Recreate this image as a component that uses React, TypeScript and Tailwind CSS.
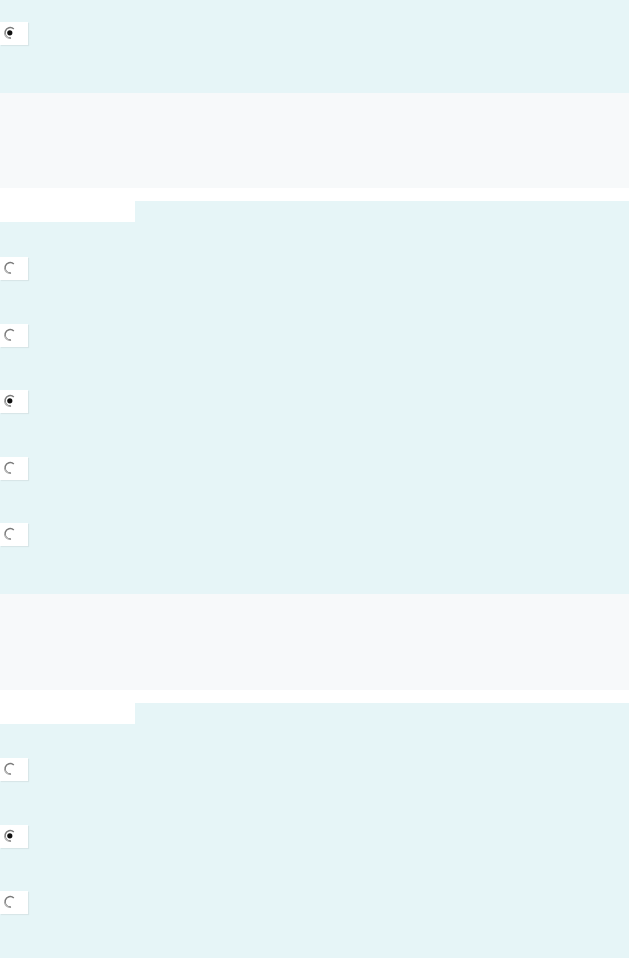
const Radio: React.FC<{ checked?: boolean }> = ({ checked }) => (
  <div className="w-[28px] h-[23px] bg-white shadow-[1px_1px_1px_rgba(0,0,0,0.06)]">
    <svg width="28" height="23" viewBox="0 0 28 23">
      <path
        d="M13.8 7 A5.2 5.2 0 1 0 11 15.9"
        fill="none"
        stroke="#7a7a7a"
        strokeWidth="1.5"
      />
      <path
        d="M4.6 12 A5.2 5.2 0 0 0 8.5 15.9"
        fill="none"
        stroke="#bdbdbd"
        strokeWidth="1.2"
      />
      {checked && <circle cx="9.8" cy="10.8" r="2.6" fill="#111111" />}
    </svg>
  </div>
);

const Row: React.FC<{ checked?: boolean }> = ({ checked }) => (
  <div className="h-[66.5px]">
    <Radio checked={checked} />
  </div>
);

const Tab: React.FC = () => (
  <>
    <div className="h-[13px] bg-white" />
    <div className="h-[21px] flex">
      <div className="w-[135px] bg-white" />
      <div className="flex-1" />
    </div>
  </>
);

const App: React.FC = () => {
  return (
    <div className="min-h-[958px] w-full bg-[#e6f5f7] font-['Liberation_Sans',sans-serif]">
      <div className="h-[93px] pt-[22px]">
        <Radio checked />
      </div>
      <div className="h-[95px] bg-[#f7f9fa]" />
      <div className="h-[406px]">
        <Tab />
        <div className="pt-[35px]">
          <Row />
          <Row />
          <Row checked />
          <Row />
          <Row />
        </div>
      </div>
      <div className="h-[96px] bg-[#f7f9fa]" />
      <div className="h-[268px]">
        <Tab />
        <div className="pt-[34px]">
          <Row />
          <Row checked />
          <Row />
        </div>
      </div>
    </div>
  );
};

export default App;
